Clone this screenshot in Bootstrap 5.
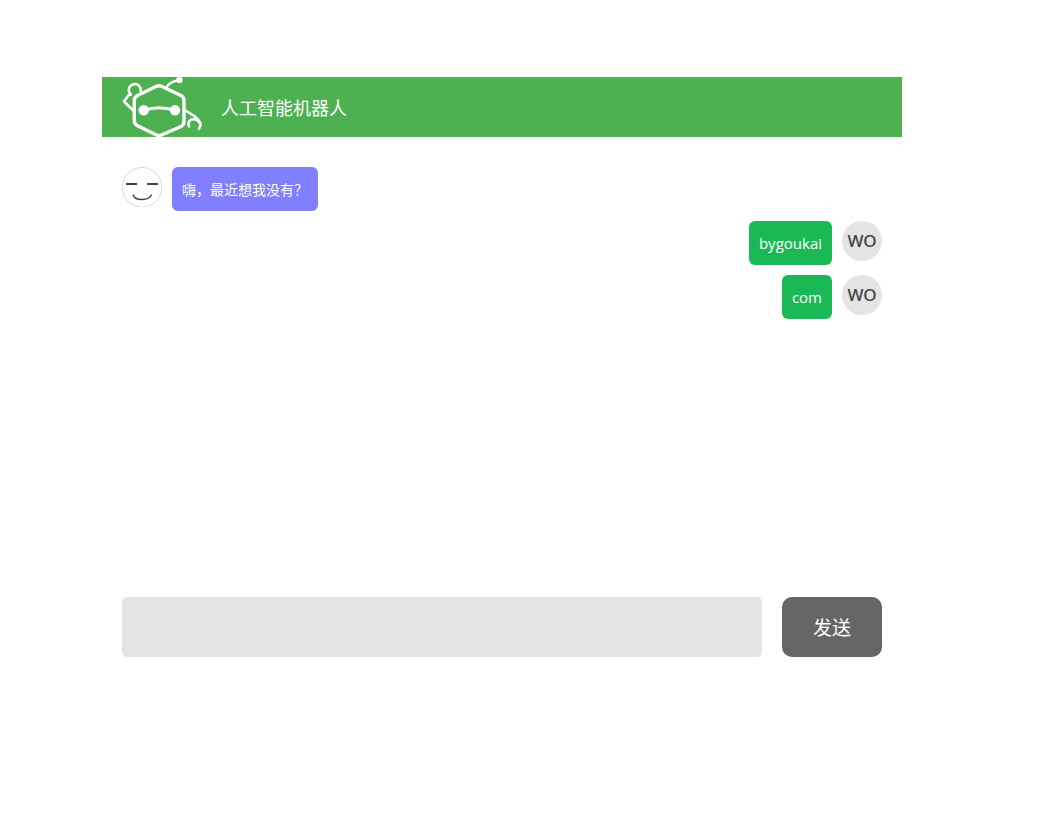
<!DOCTYPE html>
<html lang="zh-CN">
<head>
<meta charset="utf-8">
<meta name="viewport" content="width=device-width, initial-scale=1">
<title>人工智能机器人</title>
<link href="https://cdn.jsdelivr.net/npm/bootstrap@5.3.0/dist/css/bootstrap.min.css" rel="stylesheet">
<style>
body { font-family: "Open Sans", "Noto Sans CJK SC", sans-serif; font-size: 14px; color: #fff; background: #fff; }
.chat { max-width: 800px; margin: 77px auto 0 102px; }
.chat-head { height: 60px; background: #4eb151; gap: 19px; padding: 0 20px; }
.chat-title { font: 18px/60px "Noto Sans CJK SC", sans-serif; }
.chat-log { min-height: 460px; padding: 30px 20px 20px; gap: 10px; }
.chat-row { gap: 10px; }
.chat-form { gap: 20px; padding: 0 20px; }
.bubble { padding: 10px; line-height: 24px; border-radius: 6px; }
.bubble-bot { background: #8080ff; font-family: "Noto Sans CJK SC", sans-serif; }
.bubble-me { background: #1ab956; font-size: 15px; }
.avatar { width: 40px; height: 40px; }
.avatar-me { background: #e4e4e4; color: #3c4245; font-family: "Noto Sans", sans-serif; font-size: 17px; line-height: 40px; font-weight: 500; text-align: center; }
.chat-input, .chat-input:focus { height: 60px; background: #e4e4e4; border: 0; border-radius: 5px; font-size: 18px; }
.chat-send, .chat-send:hover { width: 100px; height: 60px; background: #666; color: #fff; border: 0; border-radius: 10px; font: 19px/30px "Noto Sans CJK SC", sans-serif; }
</style>
</head>
<body>
<main class="chat">
  <header class="chat-head d-flex align-items-center">
    <svg class="flex-shrink-0" width="80" height="60" viewBox="0 0 80 60" fill="none" stroke="#fff" stroke-width="2.6" stroke-linecap="round" stroke-linejoin="round" aria-hidden="true">
      <path stroke-width="3.4" d="M34 9.5Q37 8 40 9.5L59 18.5Q62 20 62 23.5V44.5Q62 48 59 49.5L40 57.8Q37 59.2 34 57.8L15.5 48.8Q12.3 47.2 12.3 43.5V23.5Q12.3 20 15.5 18.5Z"/>
      <path stroke-width="3" d="M21.7 33.3Q37 28 53 33.3"/>
      <g fill="#fff" stroke="none"><circle cx="21.7" cy="33.3" r="5.2"/><circle cx="53" cy="33.3" r="5.2"/><circle cx="57.4" cy="3" r="3.2"/></g>
      <path stroke-width="2.4" d="M45 9.5Q48 4.5 57 3.2"/>
      <path d="M18.7 14A6 6 0 1 0 7.3 15.5L9 17.6L6.5 18.2L2 24.5L11.5 33.7"/>
      <path d="M63.5 33.5L72 38.8Q80 45.500 78.3 49L77 51.8"/>
      <path d="M67 49.3C65.2 45 68 42.3 71.500 42.300Q75 42.300 78 46"/>
    </svg>
    <h1 class="chat-title m-0">人工智能机器人</h1>
  </header>
  <section class="chat-log d-flex flex-column" aria-label="聊天记录">
    <div class="chat-row d-flex align-items-start">
      <svg class="avatar flex-shrink-0" viewBox="0 0 40 40" fill="none" role="img" aria-label="机器人">
        <circle cx="20" cy="20.3" r="19.8" stroke="#d8d8d8"/>
        <path d="M4 17H15M25 17H36" stroke="#3c4245" stroke-width="2"/>
        <path d="M11 27.5Q12 32.5 20 32.5T29.5 27.5" stroke="#3c4245" stroke-width="1.3"/>
      </svg>
      <div class="bubble bubble-bot">嗨，最近想我没有？</div>
    </div>
    <div class="chat-row d-flex align-items-start justify-content-end">
      <div class="bubble bubble-me">bygoukai</div>
      <div class="avatar avatar-me rounded-circle">WO</div>
    </div>
    <div class="chat-row d-flex align-items-start justify-content-end">
      <div class="bubble bubble-me">com</div>
      <div class="avatar avatar-me rounded-circle">WO</div>
    </div>
  </section>
  <form class="chat-form d-flex">
    <input class="form-control chat-input" type="text" aria-label="消息" autocomplete="off">
    <button class="btn chat-send flex-shrink-0" type="button">发送</button>
  </form>
</main>
<script src="https://cdn.jsdelivr.net/npm/bootstrap@5.3.0/dist/js/bootstrap.bundle.min.js"></script>
</body>
</html>
